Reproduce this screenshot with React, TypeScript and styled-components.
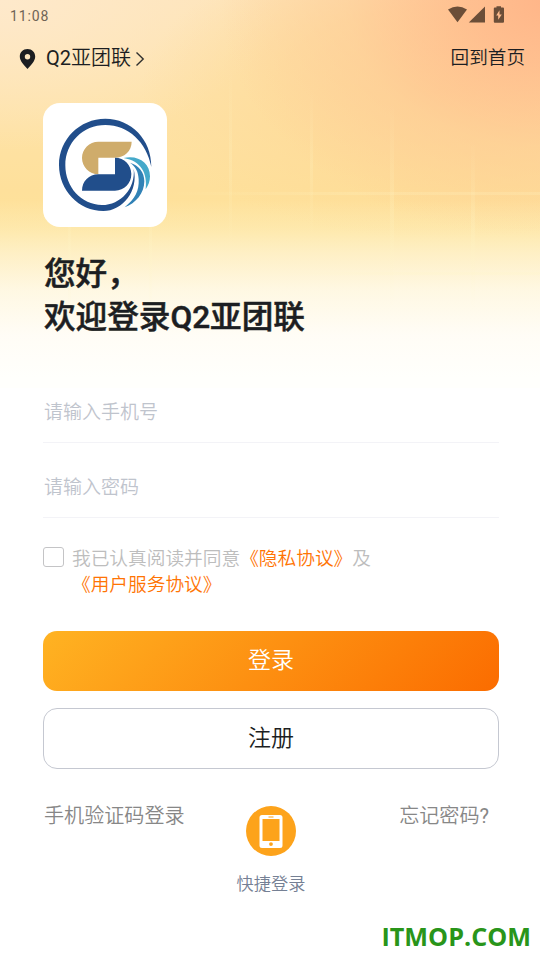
import React from "react";
import styled, { createGlobalStyle } from "styled-components";

const Global = createGlobalStyle`
  * { box-sizing: border-box; }
  body { margin: 0; background: #fff; }
  button, input { font: inherit; margin: 0; }
`;

const gridTint = "rgba(255, 246, 200, 0.2)";
const fadeDown = `linear-gradient(180deg, transparent, ${gridTint}, transparent)`;
const fadeAcross = `linear-gradient(90deg, transparent, ${gridTint}, ${gridTint})`;

const Screen = styled.div`
  width: 540px;
  height: 960px;
  overflow: hidden;
  display: flex;
  flex-direction: column;
  color: #1c1e22;
  font-family: Roboto, "Noto Sans CJK SC", sans-serif;
  font-weight: 350;
  background-color: #fff;
  background-repeat: no-repeat;
  background-image:
    ${fadeDown}, ${fadeDown}, ${fadeDown}, ${fadeDown}, ${fadeDown}, ${fadeDown},
    ${fadeAcross}, ${fadeAcross},
    linear-gradient(180deg, rgba(255, 255, 255, 0) 200px, rgba(253, 250, 238, 0.2) 227px, rgba(254, 251, 240, 0.48) 252px, rgba(255, 253, 246, 0.78) 290px, rgba(255, 254, 251, 0.94) 335px, #fffffc 378px, #fffffc 388px, #fff 388px),
    radial-gradient(ellipse 330px 240px at 550px 0px, #ffb588 0%, rgba(255, 186, 140, 0.85) 25%, rgba(255, 196, 145, 0.4) 62%, rgba(255, 200, 140, 0) 100%),
    radial-gradient(ellipse 300px 150px at 440px 90px, rgba(254, 213, 150, 0.8), rgba(254, 216, 148, 0.5) 55%, rgba(254, 217, 148, 0) 100%),
    radial-gradient(ellipse 280px 150px at 0px 0px, #fee9cb, rgba(254, 231, 198, 0) 100%),
    linear-gradient(180deg, #fee4b8 0, #fee3aa 90px, #fee09b 190px, #fee49a 235px, #fee8a6 390px);
  background-size:
    3px 180px, 3px 150px, 4px 210px, 4px 170px, 3px 140px, 3px 140px,
    380px 3px, 260px 3px,
    540px 390px, 540px 390px, 540px 390px, 540px 390px, 540px 390px;
  background-position:
    229px 70px, 310px 90px, 390px 100px, 471px 140px, 68px 180px, 149px 180px,
    160px 192px, 280px 272px,
    0 0, 0 0, 0 0, 0 0, 0 0;
`;

const StatusBar = styled.div`
  height: 32px;
  flex: none;
  display: flex;
  justify-content: space-between;
  padding: 0 35px 0 10px;
  color: #6f6455;
  font: 400 14px/32px Roboto, sans-serif;
  letter-spacing: 0.9px;
`;

const StatusIcons = styled.svg`
  width: 58px;
  height: 20px;
  margin-top: 5px;
  fill: #6b4e38;
`;

const NavBar = styled.header`
  height: 52px;
  flex: none;
  display: flex;
  justify-content: space-between;
  align-items: center;
  padding: 0 15px 0 19px;
`;

const Location = styled.div`
  display: flex;
  align-items: center;
  font-size: 20px;
  line-height: 30px;
`;

const Latin = styled.span<{ $weight: number }>`
  font-weight: ${(p) => p.$weight};
`;

const PinIcon = styled.svg`
  width: 17px;
  height: 22px;
  margin: 2px 10px 0 0;
`;

const Chevron = styled.svg`
  width: 10px;
  height: 16px;
  margin: 1px 0 0 4px;
  fill: none;
  stroke: #30302e;
  stroke-width: 1.4;
`;

const HomeLink = styled.a`
  font-size: 18.6px;
  line-height: 28px;
`;

const Content = styled.main`
  display: flex;
  flex-direction: column;
  padding: 19px 41px 0 43px;
`;

const LogoCard = styled.svg`
  width: 124px;
  height: 124px;
  border-radius: 17px;
  background: #fff;
`;

const Title = styled.h1`
  margin: 26px 0 0;
  padding-left: 1px;
  font-size: 31.6px;
  line-height: 43px;
  font-weight: 500;
  -webkit-text-stroke: 0.5px #1c1e22;
`;

const Fields = styled.div`
  margin-top: 29px;
`;

const Field = styled.input`
  display: block;
  width: 100%;
  height: 75px;
  padding: 14px 0 0 1px;
  border: 0;
  border-bottom: 1px solid #f3f3f7;
  outline: 0;
  background: transparent;
  font-size: 19px;
  &::placeholder { color: #bfc4cd; opacity: 1; }
`;

const Agreement = styled.label`
  display: flex;
  margin-top: 28px;
  gap: 8px;
  color: #bdbdbd;
  font-size: 18.7px;
  line-height: 26px;
`;

const CheckBox = styled.span`
  width: 21px;
  height: 20px;
  margin-top: 1px;
  flex: none;
  border: 1px solid #c4c4c6;
  border-radius: 3px;
  background: #fff;
`;

const Policy = styled.a`
  color: #ff7404;
`;

const Buttons = styled.div`
  display: flex;
  flex-direction: column;
  gap: 17px;
  margin-top: 33px;
`;

const ActionButton = styled.button<{ $primary?: boolean }>`
  height: ${(p) => (p.$primary ? 60 : 61)}px;
  padding: 0 0 ${(p) => (p.$primary ? 6 : 5)}px;
  border: ${(p) => (p.$primary ? "0" : "1px solid #c5c8d1")};
  border-radius: 14px;
  color: ${(p) => (p.$primary ? "#fff" : "#1c1e22")};
  background: ${(p) => (p.$primary ? "linear-gradient(135deg, #ffb322, #fb6c00)" : "#fff")};
  font-size: 23px;
`;

const Options = styled.div`
  display: grid;
  grid-template-columns: 1fr 70px 1fr;
  margin-top: 32px;
  color: #878787;
  font-size: 20.1px;
  line-height: 30px;
`;

const SmsLogin = styled.a`
  padding-left: 1px;
`;

const Forgot = styled.a`
  justify-self: end;
  margin-right: 10px;
`;

const QuickLogin = styled.div`
  display: flex;
  flex-direction: column;
  align-items: center;
  margin-top: 5px;
  color: #758094;
  font-size: 17.2px;
  line-height: 26px;
  white-space: nowrap;
`;

const PhoneIcon = styled.svg`
  width: 50px;
  height: 50px;
  margin-bottom: 15px;
`;

const Footer = styled.footer`
  align-self: flex-end;
  margin: 22px 9px 0 0;
  color: #29951a;
  font: 700 25.2px/34px "Open Sans", sans-serif;
`;

export default function App() {
  return (
    <Screen>
      <Global />
      <StatusBar>
        <span>11:08</span>
        <StatusIcons viewBox="447 5 58 20">
          <path d="M448 9.6Q457.500 3.300 467 9.600L457.500 22.200Z" />
          <path d="M485 6.500V22.500H468.800Z" />
          <path
            fillRule="evenodd"
            d="M496.500 6.200h4.500v1.300h2q1 0 1 1v13.200q0 1-1 1h-8.200q-1 0-1-1V8.500q0-1 1-1h1.700zM499.500 10.300l-3.300 5.200h2v4.300l3.600-5.400h-2.300z"
          />
        </StatusIcons>
      </StatusBar>

      <NavBar>
        <Location>
          <PinIcon viewBox="0 0 17 22">
            <path
              fill="#1c1e22"
              fillRule="evenodd"
              d="M8.500 1C4 1 .8 4.200.8 8.500c0 4.500 4.200 8.500 7.700 12.500 3.500-4 7.700-8 7.700-12.500C16.200 4.200 13 1 8.500 1zm0 5a2.700 2.700 0 1 1 0 5.400 2.700 2.700 0 0 1 0-5.400z"
            />
          </PinIcon>
          <span>
            <Latin $weight={400}>Q2</Latin>亚团联
          </span>
          <Chevron viewBox="0 0 10 16">
            <path d="M1.500 1.500 8.200 8 1.500 14.500" />
          </Chevron>
        </Location>
        <HomeLink>回到首页</HomeLink>
      </NavBar>

      <Content>
        <LogoCard viewBox="24 24 372 372">
          <path
            fill="#214e8b"
            d="M349 216C350 133 288 71 211 71C134 71 72 133 72 210C72 287 132 348 205 348C262 348 312 288 296 221C302 280 257 330 201 330C139 330 91 276 91 211C91 143 144 90 211 90C280 90 335 142 349 216Z"
          />
          <path
            fill="#cfac6b"
            d="M290 140H190C163 140 141 162 141 189C141 216 163 238 190 238V188H240C268 188 290 168 290 140Z"
          />
          <path
            fill="#214e8b"
            d="M240 188C268 188 289 210 289 237C289 265 268 287 240 287H141C141 259 162 238 190 238H240Z"
          />
          <path
            fill="#3182b6"
            d="M285 203C312 211 328 232 328 259C328 294 303 325 269 337C300 312 313 287 311 253C310 230 302 215 285 203Z"
          />
          <path
            fill="#45a9ca"
            d="M266 189C310 179 345 204 345 244C345 259 340 272 332 283C338 234 318 198 266 189Z"
          />
        </LogoCard>

        <Title>
          您好，
          <br />
          欢迎登录Q2亚团联
        </Title>

        <Fields>
          <Field type="tel" placeholder="请输入手机号" />
          <Field type="password" placeholder="请输入密码" />
        </Fields>

        <Agreement>
          <CheckBox />
          <span>
            我已认真阅读并同意<Policy>《隐私协议》</Policy>及
            <br />
            <Policy>《用户服务协议》</Policy>
          </span>
        </Agreement>

        <Buttons>
          <ActionButton $primary>登录</ActionButton>
          <ActionButton>注册</ActionButton>
        </Buttons>

        <Options>
          <SmsLogin>手机验证码登录</SmsLogin>
          <QuickLogin>
            <PhoneIcon viewBox="0 0 50 50">
              <circle cx="25" cy="25" r="25" fill="#fda31b" />
              <path
                fill="#fff"
                fillRule="evenodd"
                d="M16 9h18q2.500 0 2.500 2.500v28q0 2.500-2.500 2.500H16q-2.500 0-2.500-2.500v-28Q13.500 9 16 9zM16.500 13v22h17V13zM22.500 10.500v1h5v-1zM25 36.200a1.900 1.900 0 1 0 0 3.800 1.900 1.900 0 0 0 0-3.800z"
              />
            </PhoneIcon>
            快捷登录
          </QuickLogin>
          <Forgot>
            忘记密码<Latin $weight={400}>?</Latin>
          </Forgot>
        </Options>
      </Content>

      <Footer>ITMOP.COM</Footer>
    </Screen>
  );
}
